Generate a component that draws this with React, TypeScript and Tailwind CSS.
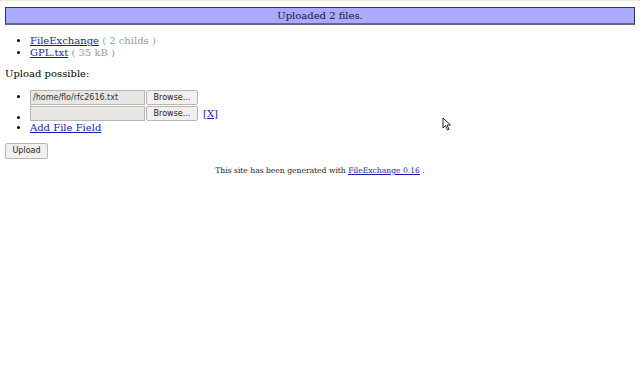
export default function App() {
  return (
    <div className="relative w-[640px] h-[375px] bg-white text-black font-['DejaVu_Serif',serif] text-[10px] leading-[11.5px]">
      <div className="h-px bg-[#ecebd9]" />
      <div className="mx-[5px] mt-[6px] h-[18px] border border-[#33335a] border-b-2 border-b-[#66668a] bg-[#aaaaff] text-center text-[10px] leading-[16px] text-[#14142a]">
        Uploaded 2 files.
      </div>

      <ul className="list-disc pl-[30px] mt-[10px]">
        <li>
          <a href="#" className="text-[#1a1aa6] underline">FileExchange</a>
          <span className="text-[#999]"> ( 2 childs )</span>
        </li>
        <li>
          <a href="#" className="text-[#1a1aa6] underline">GPL.txt</a>
          <span className="text-[#999]"> ( 35 kB )</span>
        </li>
      </ul>

      <p className="ml-[5px] mt-[10px]">Upload possible:</p>

      <ul className="list-disc pl-[30px] mt-[10px]">
        <li>
          <div className="flex items-center gap-px h-[16px]">
            <div className="w-[115px] h-[15px] border border-[#b8b6b2] bg-[#e9e7e3] px-[2px] font-['DejaVu_Sans',sans-serif] text-[8px] leading-[13px] text-[#333]">
              /home/flo/rfc2616.txt
            </div>
            <div className="w-[52px] h-[15px] border border-[#b8b6b2] rounded-[2px] bg-[#f1f0ee] text-center font-['DejaVu_Sans',sans-serif] text-[8px] leading-[13px] text-[#222]">
              Browse...
            </div>
          </div>
        </li>
        <li>
          <div className="flex items-center gap-px h-[16px]">
            <div className="w-[115px] h-[15px] border border-[#b8b6b2] bg-[#e9e7e3]" />
            <div className="w-[52px] h-[15px] border border-[#b8b6b2] rounded-[2px] bg-[#f1f0ee] text-center font-['DejaVu_Sans',sans-serif] text-[8px] leading-[13px] text-[#222]">
              Browse...
            </div>
            <a href="#" className="ml-[4px] text-[#1a1aa6] underline">[X]</a>
          </div>
        </li>
        <li>
          <a href="#" className="text-[#1a1aa6] underline">Add File Field</a>
        </li>
      </ul>

      <div className="ml-[5px] mt-[10px] w-[43px] h-[16px] border border-[#b8b6b2] rounded-[2px] bg-[#f1f0ee] text-center font-['DejaVu_Sans',sans-serif] text-[8px] leading-[14px] text-[#222]">
        Upload
      </div>

      <p className="mt-[7px] text-center text-[7.6px] leading-[10px] text-[#222]">
        This site has been generated with{" "}
        <a href="#" className="text-[#1a1aa6] underline">FileExchange 0.16</a> .
      </p>

      <svg className="absolute left-[442px] top-[117px]" width="10" height="14" viewBox="0 0 10 14">
        <path d="M1 1 L1 11 L3.5 8.5 L5.5 13 L7 12.3 L5 8 L8.5 8 Z" fill="#fff" stroke="#222" strokeWidth="1" />
      </svg>
    </div>
  );
}
